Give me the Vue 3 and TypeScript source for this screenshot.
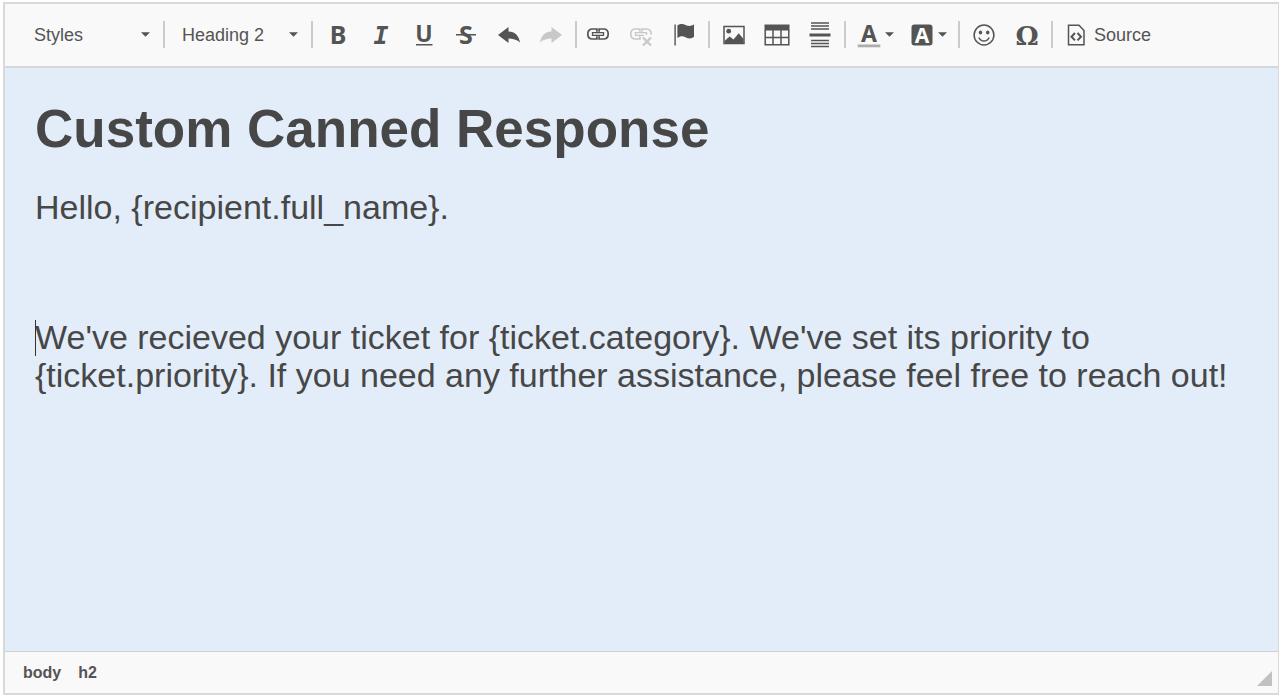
<script setup lang="ts">
import { ref } from 'vue'

const style = ref('Styles')
const format = ref('Heading 2')
const styles: string[] = ['Styles', 'Marker', 'Big', 'Small']
const formats: string[] = ['Normal', 'Heading 1', 'Heading 2', 'Heading 3']
const path: string[] = ['body', 'h2']
</script>

<template>
  <main class="editor">
    <div class="toolbar" role="toolbar" aria-label="Editor toolbar">
      <label class="combo combo-styles">
        <select v-model="style" aria-label="Styles">
          <option v-for="s in styles" :key="s">{{ s }}</option>
        </select>
        <svg class="caret" viewBox="0 0 8 4"><path d="M0 0H8L4 4Z" /></svg>
      </label>
      <span class="sep"></span>
      <label class="combo combo-format">
        <select v-model="format" aria-label="Paragraph format">
          <option v-for="f in formats" :key="f">{{ f }}</option>
        </select>
        <svg class="caret" viewBox="0 0 8 4"><path d="M0 0H8L4 4Z" /></svg>
      </label>
      <span class="sep"></span>

      <div class="group six">
        <button type="button" aria-label="Bold">
          <svg class="icon" viewBox="0 0 32 32"><text class="sans" x="16" y="25" font-size="25">B</text></svg>
        </button>
        <button type="button" aria-label="Italic">
          <svg class="icon" viewBox="0 0 32 32"><text class="slab" x="16" y="25" font-size="25">I</text></svg>
        </button>
        <button type="button" aria-label="Underline">
          <svg class="icon" viewBox="0 0 32 32">
            <text class="sans" x="16" y="23" font-size="23">U</text>
            <path d="M8 25H24.500V26.500H8Z" />
          </svg>
        </button>
        <button type="button" aria-label="Strikethrough">
          <svg class="icon" viewBox="0 0 32 32">
            <text class="sans" x="16" y="25" font-size="25">S</text>
            <path d="M6 15H26V16.500H6Z" />
          </svg>
        </button>
        <button type="button" aria-label="Undo">
          <svg class="icon" viewBox="0 0 32 32">
            <path d="M5 16L15.500 8V12.500C22 12.500 26 17 27 23.500C23.500 20.500 20 19.500 15.500 19.500V24Z" />
          </svg>
        </button>
        <button type="button" aria-label="Redo" disabled>
          <svg class="icon" viewBox="0 0 32 32">
            <path d="M26 16L15.500 8V12.500C9 12.500 5 17 4 23.500C7.500 20.500 11 19.500 15.500 19.500V24Z" />
          </svg>
        </button>
      </div>
      <span class="sep"></span>

      <div class="group three links">
        <button type="button" aria-label="Link">
          <svg class="icon" viewBox="0 0 32 32">
            <g class="line" stroke-width="1.700">
              <path d="M14.900 12.800V10H10.500C7.300 10 5.800 12 5.800 15S7.300 20 10.500 20H14.900V17.200" />
              <path d="M17.100 12.800V10H21.500C24.700 10 26.200 12 26.200 15S24.700 20 21.500 20H17.100V17.200" />
              <path d="M10.500 13.600H21.500M10.500 16.400H21.500M10.500 13V17M21.500 13V17" stroke-width="1.300" />
            </g>
          </svg>
        </button>
        <button type="button" aria-label="Unlink" disabled>
          <svg class="icon" viewBox="0 0 32 32">
            <g class="line" stroke-width="1.600">
              <path d="M14.900 12.800V10H10.500C7.300 10 5.800 12 5.800 15S7.300 20 10.500 20H14.900V17.200" />
              <path d="M17.100 12.800V10H21.500C24.700 10 26.200 12 26.200 15.500" />
              <path d="M10.500 13.600H21.500M10.500 16.400H19M10.500 13V17M21.500 13V16" stroke-width="1.300" />
              <path d="M18 18.500L26 26.500M26 18.500L18 26.500" stroke-width="2.200" />
            </g>
          </svg>
        </button>
        <button type="button" aria-label="Anchor">
          <svg class="icon" viewBox="0 0 32 32">
            <path d="M6.400 5.500H7.800V26.500H6.400Z" />
            <path d="M9.400 6.500C12.500 4.500 15 4.700 18 6.200C21 7.500 23.500 7 26 5.500V17.700C23.500 20 20.500 19.800 17.500 18.200C14.500 16.700 12 17.300 9.400 19Z" />
          </svg>
        </button>
      </div>
      <span class="sep"></span>

      <div class="group three">
        <button type="button" aria-label="Image">
          <svg class="icon" viewBox="0 0 32 32">
            <rect class="line" x="6" y="7.500" width="20" height="17" stroke-width="1.500" />
            <circle cx="10.700" cy="12.200" r="2.400" />
            <path d="M7 24V21.500L11.700 17.500L15.500 20.500L20.700 14.200L25.500 20V24Z" />
          </svg>
        </button>
        <button type="button" aria-label="Table">
          <svg class="icon" viewBox="0 0 32 32">
            <path d="M3.500 5.500H28.500V11.500H3.500Z" />
            <path class="line" stroke-width="1.500" d="M4.200 11V25.800H27.800V11M4.200 18.500H27.800M12 11V26M20 11V26" />
          </svg>
        </button>
        <button type="button" aria-label="Page break">
          <svg class="icon" viewBox="0 0 32 32">
            <path class="line" stroke-width="1.300" d="M7 4H25M7 7H25M7 10H25M7 21.500H25M7 24.500H25M7 27.500H25" />
            <path d="M5.500 14.500H26.500V17.500H5.500Z" />
          </svg>
        </button>
      </div>
      <span class="sep"></span>

      <div class="group colors">
        <button type="button" aria-label="Text color">
          <svg class="icon" viewBox="0 0 32 32">
            <text class="sans" x="16" y="22.500" font-size="23">A</text>
            <path class="swatch" d="M4.700 25.500H27.300V28.300H4.700Z" />
          </svg>
          <svg class="caret" viewBox="0 0 8 4"><path d="M0 0H8L4 4Z" /></svg>
        </button>
        <button type="button" aria-label="Background color">
          <svg class="icon" viewBox="0 0 32 32">
            <rect x="5.500" y="5.500" width="21" height="21" rx="3" />
            <text class="sans light" x="16" y="23.500" font-size="21">A</text>
          </svg>
          <svg class="caret" viewBox="0 0 8 4"><path d="M0 0H8L4 4Z" /></svg>
        </button>
      </div>
      <span class="sep"></span>

      <div class="group two">
        <button type="button" aria-label="Smiley">
          <svg class="icon" viewBox="0 0 32 32">
            <circle class="line" cx="16" cy="16" r="9.900" stroke-width="1.500" />
            <ellipse cx="12.500" cy="13.500" rx="1.700" ry="2" />
            <ellipse cx="19.700" cy="13.500" rx="1.700" ry="2" />
            <path class="line" stroke-width="1.400" d="M10.800 18.500Q12.500 22 16 22T21.200 18.500" />
          </svg>
        </button>
        <button type="button" aria-label="Special character">
          <svg class="icon" viewBox="0 0 32 32"><text class="serif" x="16" y="26" font-size="26">Ω</text></svg>
        </button>
      </div>
      <span class="sep"></span>

      <button type="button" class="source">
        <svg class="icon" viewBox="0 0 32 32">
          <path class="line" stroke-width="1.500" d="M8.500 6.200H19L24 11.500V25.800H8.500Z" />
          <path class="line" stroke-width="2" d="M15 14L11.500 17.700L15 21.400M17.500 14L21 17.700L17.500 21.400" />
        </svg>
        <span>Source</span>
      </button>
    </div>

    <div
      class="content"
      contenteditable="true"
      role="textbox"
      aria-multiline="true"
      aria-label="Canned response"
      spellcheck="false"
    >
      <h2>Custom Canned Response</h2>
      <p>Hello, {recipient.full_name}.</p>
      <p><br /></p>
      <p class="current">We've recieved your ticket for {ticket.category}. We've set its priority to {ticket.priority}. If you need any further assistance, please feel free to reach out!</p>
    </div>

    <footer class="status">
      <nav aria-label="Elements path">
        <a v-for="el in path" :key="el" href="#">{{ el }}</a>
      </nav>
      <svg class="grip" viewBox="0 0 15 15"><path d="M15 0V15H0Z" /></svg>
    </footer>
  </main>
</template>

<style>
body {
  background: #fff;
}
#app {
  padding: 2px 1px 1px 3px;
}
</style>

<style scoped>
.editor {
  display: flex;
  flex-direction: column;
  box-sizing: border-box;
  min-height: calc(100vh - 3px);
  border: 2px solid #d9d9d9;
  border-right-width: 1px;
  font-family: "Liberation Sans", Arial, sans-serif;
  color: #545454;
  background: #f9f9f9;
}
.toolbar {
  display: flex;
  align-items: center;
  min-height: 61px;
  padding-bottom: 1px;
  border-bottom: 2px solid #d6d8da;
}
.sep {
  flex: none;
  width: 2px;
  height: 27px;
  background: #cbcbcb;
}
.combo {
  display: grid;
  align-items: center;
}
.combo select,
.combo .caret {
  grid-area: 1 / 1;
}
.combo .caret {
  justify-self: end;
  margin-right: 13px;
  pointer-events: none;
}
.combo select {
  appearance: none;
  width: 100%;
  height: 40px;
  margin: 0;
  border: 0;
  background: transparent;
  color: inherit;
  font: 18px "Liberation Sans", Arial, sans-serif;
}
.combo-styles {
  width: 158px;
}
.combo-styles select {
  padding: 0 0 0 29px;
}
.combo-format {
  width: 146px;
}
.combo-format select {
  padding: 0 0 0 17px;
}
.group {
  display: flex;
}
.six {
  width: 256px;
  padding: 0 2px 0 4px;
}
.three {
  width: 128px;
  padding: 0 3px;
}
.links {
  padding: 0 3px 0 0;
}
.two {
  width: 86px;
  padding: 0 3px 0 2px;
}
.group button {
  flex: 1;
}
.colors {
  gap: 12px;
  padding: 0 11px 0 7px;
}
button {
  display: flex;
  align-items: center;
  justify-content: center;
  height: 40px;
  margin: 0;
  padding: 0;
  border: 0;
  background: transparent;
  color: inherit;
  font: 18px "Liberation Sans", Arial, sans-serif;
}
button:disabled {
  color: #c8c8c8;
}
.source {
  gap: 2px;
  padding: 0 8px 0 7px;
}
.source span {
  padding-top: 1px;
}
svg {
  display: block;
  flex: none;
  overflow: visible;
  fill: currentColor;
}
.icon {
  width: 32px;
  height: 32px;
}
.caret {
  width: 9px;
  height: 5px;
}
.line {
  fill: none;
  stroke: currentColor;
}
.swatch {
  fill: #adadad;
}
text {
  text-anchor: middle;
  font-weight: 700;
}
.sans {
  font-family: "Noto Sans", "Open Sans", sans-serif;
}
.slab {
  font-family: "DejaVu Sans Mono", monospace;
  font-style: italic;
}
.serif {
  font-family: "DejaVu Serif", serif;
}
.light {
  fill: #fff;
}
.content {
  flex: 1;
  padding: 29px 29px 29px 30px;
  background: #e3edfa;
  color: #474747;
  font-size: 34px;
  line-height: 38px;
  outline: none;
}
h2 {
  margin: 0 0 27px;
  font-size: 53px;
  line-height: 64px;
}
p {
  margin: 0 0 27px;
}
.current {
  position: relative;
}
.current::before {
  content: "";
  position: absolute;
  top: 2px;
  left: 0;
  width: 1px;
  height: 36px;
  background: #333;
}
.status {
  display: flex;
  align-items: center;
  justify-content: space-between;
  min-height: 41px;
  padding: 0 6px 0 18px;
  border-top: 1px solid #cfd1d3;
}
.status nav {
  display: flex;
  gap: 17px;
}
.status a {
  color: #545454;
  font-size: 16px;
  font-weight: 700;
  line-height: 20px;
  text-decoration: none;
}
.grip {
  align-self: flex-end;
  width: 15px;
  height: 15px;
  margin-bottom: 7px;
  fill: #c1c1c1;
}
</style>
